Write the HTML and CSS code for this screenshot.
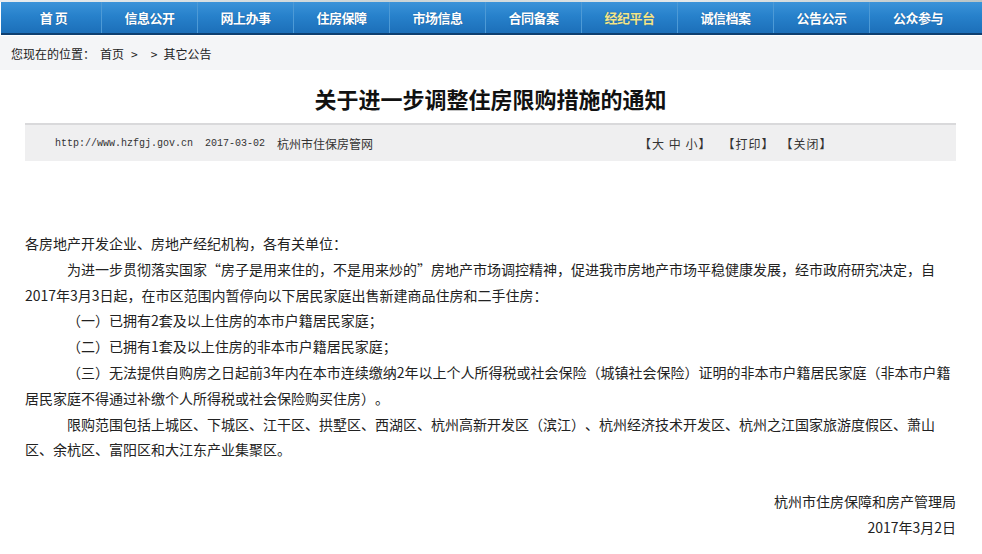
FILE: index.html
```html
<!DOCTYPE html>
<html lang="zh-CN">
<head>
<meta charset="utf-8">
<title>关于进一步调整住房限购措施的通知</title>
<link rel="stylesheet" href="styles.css">
</head>
<body>
<div class="topstrip"></div>
<nav class="nav">
  <a class="nav-item">首&nbsp;页</a>
  <a class="nav-item">信息公开</a>
  <a class="nav-item">网上办事</a>
  <a class="nav-item">住房保障</a>
  <a class="nav-item">市场信息</a>
  <a class="nav-item">合同备案</a>
  <a class="nav-item nav-active">经纪平台</a>
  <a class="nav-item">诚信档案</a>
  <a class="nav-item">公告公示</a>
  <a class="nav-item nav-last">公众参与</a>
</nav>
<div class="crumb"><span class="crumb-label">您现在的位置：</span><span>首页</span><span class="sep">&gt;</span><span class="sep">&gt;</span><span>其它公告</span></div>
<main class="article">
  <h1 class="title">关于进一步调整住房限购措施的通知</h1>
  <div class="infobar">
    <div class="meta"><span class="mono">http://www.hzfgj.gov.cn&nbsp;&nbsp;2017-03-02</span><span class="site">杭州市住保房管网</span></div>
    <div class="tools"><span>【大&nbsp;中&nbsp;小】</span><span class="tool-print">【打印】</span><span class="tool-close">【关闭】</span></div>
  </div>
  <div class="content">
    <p class="salute">各房地产开发企业、房地产经纪机构，各有关单位：</p>
    <p>为进一步贯彻落实国家“房子是用来住的，不是用来炒的”房地产市场调控精神，促进我市房地产市场平稳健康发展，经市政府研究决定，自2017年3月3日起，在市区范围内暂停向以下居民家庭出售新建商品住房和二手住房：</p>
    <p>（一）已拥有2套及以上住房的本市户籍居民家庭；</p>
    <p>（二）已拥有1套及以上住房的非本市户籍居民家庭；</p>
    <p>（三）无法提供自购房之日起前3年内在本市连续缴纳2年以上个人所得税或社会保险（城镇社会保险）证明的非本市户籍居民家庭（非本市户籍居民家庭不得通过补缴个人所得税或社会保险购买住房）。</p>
    <p>限购范围包括上城区、下城区、江干区、拱墅区、西湖区、杭州高新开发区（滨江）、杭州经济技术开发区、杭州之江国家旅游度假区、萧山区、余杭区、富阳区和大江东产业集聚区。</p>
    <p class="sign">杭州市住房保障和房产管理局</p>
    <p class="date">2017年3月2日</p>
  </div>
</main>
</body>
</html>
```
FILE: styles.css
```css
html, body {
  margin: 0;
  padding: 0;
  background: #ffffff;
}
body {
  font-family: "Noto Sans CJK SC", "Liberation Sans", sans-serif;
  color: #222;
  width: 982px;
  overflow: hidden;
  text-spacing-trim: space-all;
}
.topstrip {
  height: 2px;
  background: linear-gradient(90deg, #e8ecef, #c9d3d6 40%, #e4e8ea 70%, #b9c4c6);
}
.nav {
  display: flex;
  height: 31px;
  padding-left: 5px;
  margin-left: 1px;
  background: linear-gradient(180deg, #3b93d9 0%, #2781cb 45%, #1c6fb9 100%);
  border-bottom: 2px solid #0e3f70;
}
.nav-item {
  width: 96px;
  display: flex;
  align-items: center;
  justify-content: center;
  color: #ffffff;
  font-weight: bold;
  font-size: 13px;
  letter-spacing: -0.5px;
  border-right: 1px solid #4d9ad6;
  box-sizing: border-box;
  text-shadow: 0 0 1px rgba(0,40,90,0.5);
}
.nav-last { border-right: none; }
.nav-active { color: #f1e58a; }
.crumb {
  margin-top: 1px;
  height: 34px;
  background: #f4f5f7;
  font-size: 12px;
  line-height: 35px;
  padding-left: 11px;
  color: #222;
  display: flex;
}
.crumb-label { margin-right: 5px; }
.crumb .sep { margin: 0 6px 0 7px; }
.article {
  padding: 0 26px 0 25px;
}
.title {
  margin: 15px 0 0;
  text-align: center;
  font-size: 22px;
  line-height: 26px;
  font-weight: bold;
  color: #111;
}
.infobar {
  margin-top: 12px;
  height: 36px;
  border-top: 2px solid #d9d9db;
  background: #efeff0;
  display: flex;
  align-items: center;
  font-size: 12px;
  color: #333;
}
.meta {
  padding-left: 30px;
  width: 584px;
  display: flex;
  align-items: center;
}
.mono {
  font-family: "Liberation Mono", monospace;
  font-size: 10px;
}
.site { margin-left: 12px; }
.tools {
  display: flex;
  letter-spacing: 1px;
}
.tool-print { margin-left: 11px; }
.tool-close { margin-left: 6px; }
.content {
  margin-top: 70px;
  font-size: 14px;
  line-height: 25.8px;
  color: #222;
}
.content p {
  margin: 0;
  text-indent: 42px;
}
.content .salute { text-indent: 0; }
.content .sign {
  margin-top: 26px;
  text-align: right;
  text-indent: 0;
}
.content .date {
  text-align: right;
  text-indent: 0;
}
```
